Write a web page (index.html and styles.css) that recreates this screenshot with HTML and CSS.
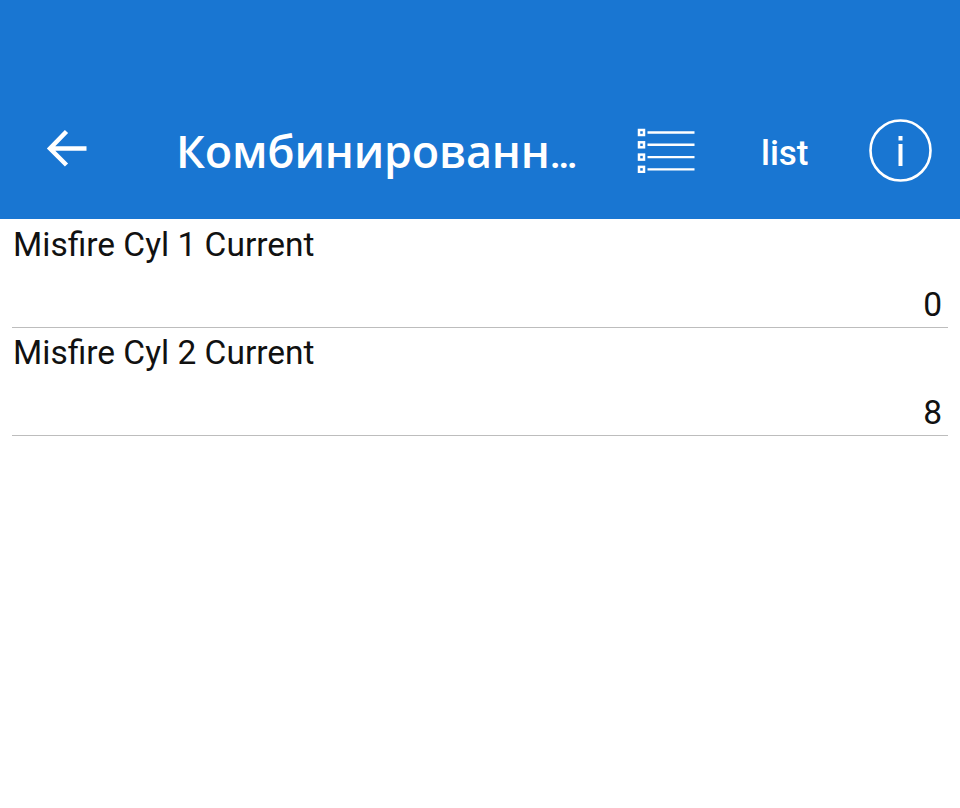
FILE: index.html
```html
<!DOCTYPE html>
<html lang="ru">
<head>
<meta charset="utf-8">
<title>Комбинированн…</title>
<link rel="stylesheet" href="styles.css">
</head>
<body>
<header class="appbar">
  <div class="toolbar">
    <button class="back" aria-label="Назад">
      <svg width="44" height="44" viewBox="0 0 44 44"><path d="M41.500 20.500H5M21.500 3.500 5 20.500 21.500 37" fill="none" stroke="#fff" stroke-width="4.500" stroke-linejoin="miter"/></svg>
    </button>
    <h1 class="title">Комбинированн<span class="dots">…</span></h1>
    <svg class="list-icon" width="60" height="46" viewBox="0 0 60 46">
      <g fill="none" stroke="#fff" stroke-width="2.500"><rect x="2" y="3" width="5" height="5"/><rect x="2" y="15.300" width="5" height="5"/><rect x="2" y="27.600" width="5" height="5"/><rect x="2" y="39.900" width="5" height="5"/></g>
      <g stroke="#fff" stroke-width="2.400"><path d="M10.500 5.500H57.500M10.500 17.800H57.500M10.500 30.100H57.500M10.500 42.400H57.500"/></g>
    </svg>
    <span class="mode">list</span>
    <svg class="info-icon" width="64" height="64" viewBox="0 0 64 64">
      <circle cx="31.500" cy="31.500" r="30" fill="none" stroke="#fff" stroke-width="2.600"/>
      <rect x="29.500" y="25" width="4" height="22" fill="#fff"/>
      <rect x="29.500" y="17" width="4" height="4.500" fill="#fff"/>
    </svg>
  </div>
</header>
<main class="list">
  <section class="row">
    <div class="name">Misfire Cyl 1 Current</div>
    <div class="value">0</div>
  </section>
  <section class="row">
    <div class="name">Misfire Cyl 2 Current</div>
    <div class="value">8</div>
  </section>
</main>
</body>
</html>
```
FILE: styles.css
```css
html, body {
  margin: 0;
  padding: 0;
  height: 808px;
  overflow: hidden;
  background: #fff;
  font-family: Roboto, "Noto Sans", sans-serif;
}
.appbar {
  height: 219px;
  background: #1976d2;
  display: flex;
  align-items: flex-end;
}
.toolbar {
  flex: 1;
  height: 136px;
  display: flex;
  align-items: center;
  color: #fff;
}
.back {
  background: none;
  border: 0;
  padding: 0;
  margin: 0 0 3px 45px;
  width: 44px;
  height: 44px;
  display: flex;
}
.title {
  margin: 0 0 0 87px;
  width: 437px;
  flex: none;
  padding-top: 4px;
  font-family: "Open Sans", "Noto Sans", sans-serif;
  font-size: 45px;
  font-weight: 650;
  letter-spacing: -0.2px;
  line-height: 60px;
  white-space: nowrap;
  overflow: hidden;
}
.dots {
  font-family: Roboto, sans-serif;
  font-size: 38px;
}
.list-icon {
  flex: none;
  margin: 0 0 3px 24px;
}
.mode {
  flex: none;
  margin: 5px 0 0 64px;
  font-size: 35px;
  font-weight: 500;
  line-height: 40px;
}
.info-icon {
  flex: none;
  margin: 0 0 1px 60px;
}
.list {
  padding: 1px 12px 0;
}
.row {
  height: 108px;
  box-sizing: border-box;
  border-bottom: 1px solid #bdbdbd;
  display: flex;
  flex-direction: column;
  justify-content: space-between;
  color: #111;
  font-size: 33.500px;
  line-height: 50px;
}
.name {
  padding-left: 1px;
}
.value {
  text-align: right;
  padding-right: 6px;
  height: 47px;
}
```
